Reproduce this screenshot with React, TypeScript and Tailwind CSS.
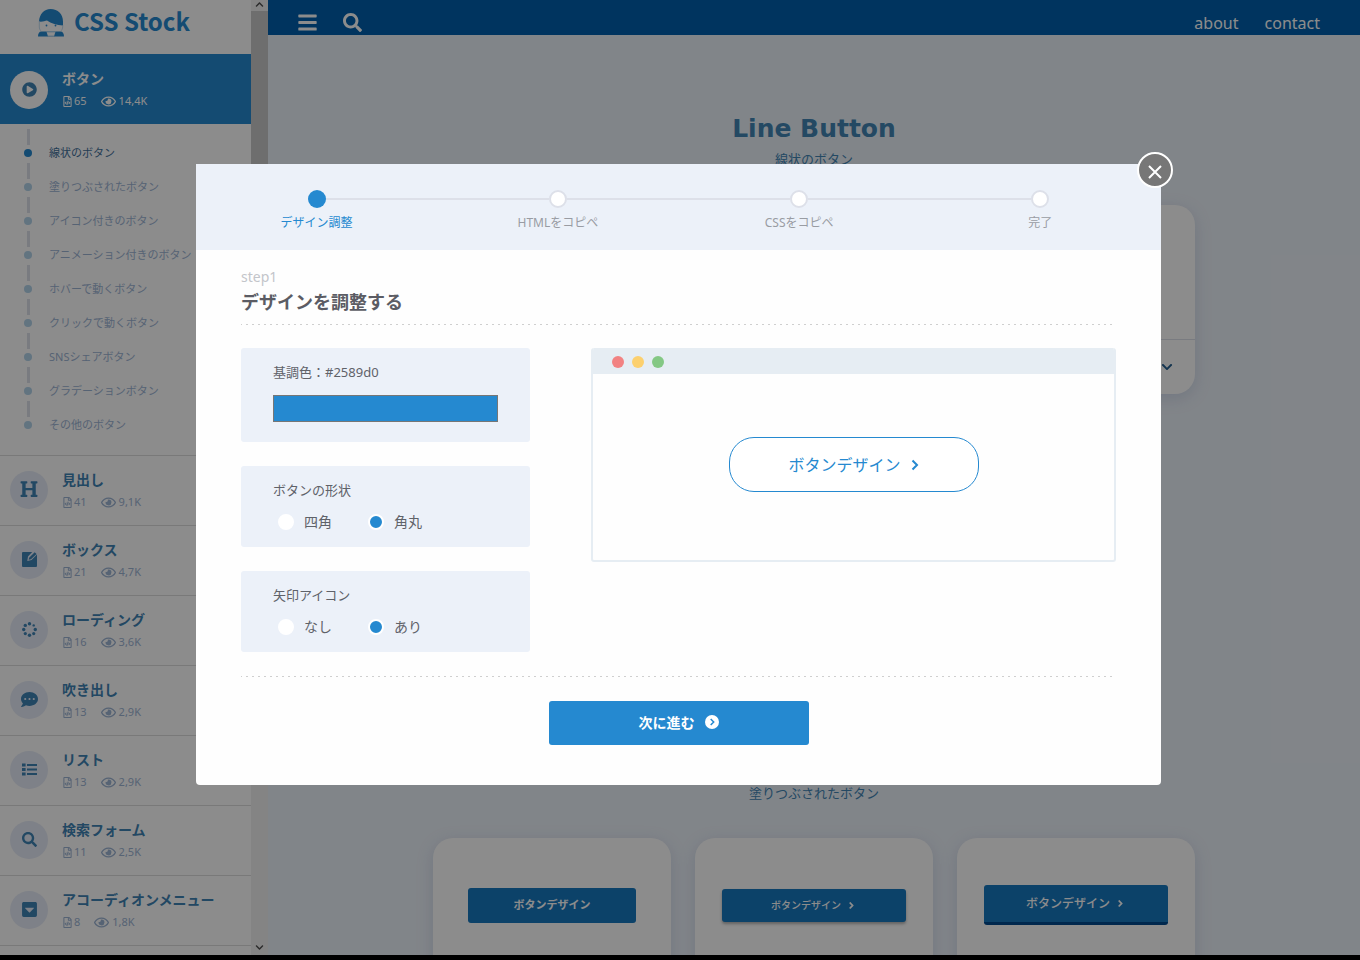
import { ReactNode, useState } from "react";
import {
  FaAngleRight,
  FaBars,
  FaCaretSquareDown,
  FaChevronDown,
  FaCommentDots,
  FaHeading,
  FaPlayCircle,
  FaRegEye,
  FaRegFileCode,
  FaSearch,
} from "react-icons/fa";

function BoxIcon() {
  return (
    <svg viewBox="0 0 15 15" className="size-[15px]" aria-hidden="true">
      <path d="M1 0H10.200L6 4.400 5.300 8.900l4.200-.8L15 2.600V14a1 1 0 0 1-1 1H1a1 1 0 0 1-1-1V1a1 1 0 0 1 1-1z" fill="currentColor" />
      <path d="M6.600 7.700l.5-2L12.700.2l1.900 1.700-5.700 5.400z" fill="currentColor" />
    </svg>
  );
}

function SpinnerIcon() {
  const dots = [
    [7.5, 1.7, 1.7],
    [11.7, 3.4, 1.2],
    [13.3, 7.5, 1.7],
    [11.7, 11.6, 1.6],
    [7.5, 13.3, 1.7],
    [3.3, 11.6, 1.6],
    [1.7, 7.5, 1.7],
    [3.3, 3.4, 1.7],
  ];
  return (
    <svg viewBox="0 0 15 15" className="size-[15px]" aria-hidden="true">
      {dots.map(([x, y, r]) => (
        <circle key={`${x}-${y}`} cx={x} cy={y} r={r} fill="currentColor" />
      ))}
    </svg>
  );
}

function ListIcon() {
  return (
    <svg viewBox="0 0 15 13" className="h-[13px] w-[15px]" aria-hidden="true">
      <path d="M0 0.500h3.600v3H0zM0 5h3.600v3H0zM0 9.500h3.600v3H0zM5 1h10v2H5zM5 5.500h10v2H5zM5 10h10v2H5z" fill="currentColor" />
    </svg>
  );
}

function NextIcon() {
  return (
    <svg viewBox="0 0 14 14" className="size-[14px]" aria-hidden="true">
      <circle cx="7" cy="7" r="7" fill="#ffffff" />
      <path d="M5.700 4L8.700 7l-3 3" stroke="#2589d0" strokeWidth="1.500" fill="none" />
    </svg>
  );
}

function Logo() {
  return (
    <svg viewBox="0 0 26 28" className="h-[28px] w-[26px]" aria-hidden="true">
      <path d="M1 12.500C1.500 5 6 0 12.500 0 20 0 25 5 25 12.500v4C19 16.200 13 14.500 9 11.500 7 12 4 13 1 12.500z" fill="#2589d0" />
      <path d="M1.300 12v6c0 1.500.6 2.800 1.500 3.800M24.700 16v2c0 1.500-.6 2.800-1.500 3.800" stroke="#a9cdea" strokeWidth="0.700" fill="none" />
      <circle cx="8.500" cy="16.500" r="0.900" fill="#2589d0" />
      <circle cx="17.500" cy="16.500" r="0.900" fill="#2589d0" />
      <path d="M0 27.500c0-3 1.200-5 3.500-5h5L10 27.500zM26 27.500c0-3-1.200-5-3.500-5h-5L16 27.500z" fill="#2589d0" />
      <path d="M8.500 22.800h9M9.500 27.200h7" stroke="#6fb0de" strokeWidth="0.800" />
    </svg>
  );
}

type Category = { name: string; files: string; views: string; icon: ReactNode };

const categories: Category[] = [
  { name: "見出し", files: "41", views: "9,1K", icon: <FaHeading size={18} /> },
  { name: "ボックス", files: "21", views: "4,7K", icon: <BoxIcon /> },
  { name: "ローディング", files: "16", views: "3,6K", icon: <SpinnerIcon /> },
  { name: "吹き出し", files: "13", views: "2,9K", icon: <FaCommentDots size={17} /> },
  { name: "リスト", files: "13", views: "2,9K", icon: <ListIcon /> },
  { name: "検索フォーム", files: "11", views: "2,5K", icon: <FaSearch size={15} /> },
  { name: "アコーディオンメニュー", files: "8", views: "1,8K", icon: <FaCaretSquareDown size={17} /> },
];

const subItems = [
  "線状のボタン",
  "塗りつぶされたボタン",
  "アイコン付きのボタン",
  "アニメーション付きのボタン",
  "ホバーで動くボタン",
  "クリックで動くボタン",
  "SNSシェアボタン",
  "グラデーションボタン",
  "その他のボタン",
];

function CategoryRow({ item, active = false }: { item: Category; active?: boolean }) {
  return (
    <a
      href="#"
      className={
        active
          ? "flex h-[70px] items-start border-t border-[#2589d0] bg-[#2589d0] pl-[10px] text-white"
          : "flex h-[70px] items-start border-t border-[#dcdcdc] pl-[10px] text-[#3f83b5]"
      }
    >
      <span
        className={
          active
            ? "mt-[16px] flex size-[38px] shrink-0 items-center justify-center rounded-full bg-white pb-[2px] text-[#3f83b5]"
            : "mt-[15px] flex size-[38px] shrink-0 items-center justify-center rounded-full bg-[#e6ebf7] pb-[2px]"
        }
      >
        {item.icon}
      </span>
      <span className="flex flex-col pt-[13px] pl-[14px]">
        <span className="text-[14px] leading-[22px] font-bold whitespace-nowrap">{item.name}</span>
        <span className={active ? "flex items-center text-[11px] leading-[22px]" : "flex items-center text-[11px] leading-[22px] text-[#9db4d4]"}>
          <FaRegFileCode size={11} />
          <span className="pl-[1px]">{item.files}</span>
          <FaRegEye size={15} className="ml-[14px]" />
          <span className="pl-[3px]">{item.views}</span>
        </span>
      </span>
    </a>
  );
}

function Sidebar() {
  return (
    <aside className="flex w-[268px] shrink-0 overflow-hidden bg-white">
      <nav className="w-[251px]">
        <a href="#" className="flex h-[54px] items-start gap-[10px] pt-[9px] pl-[38px] text-[#2589d0]">
          <Logo />
          <span className="font-['Noto_Sans_CJK_JP',sans-serif] text-[24px] leading-[24px] font-bold">CSS Stock</span>
        </a>
        <CategoryRow active item={{ name: "ボタン", files: "65", views: "14,4K", icon: <FaPlayCircle size={15} /> }} />
        <ul className="h-[331px] pt-[5px]">
          {subItems.map((label, i) => (
            <li key={label} className="flex h-[34px] pl-[24px]">
              <span className="flex w-[8px] shrink-0 flex-col items-center">
                <span className="h-[16px] w-[3px] bg-[#dde0ea]" />
                <span className={i === 0 ? "mt-[4px] size-[8px] rounded-full bg-[#2589d0]" : "mt-[4px] size-[8px] rounded-full bg-[#b3d3ea]"} />
              </span>
              <a
                href="#"
                className={
                  i === 0
                    ? "pt-[13px] pl-[17px] text-[11px] leading-[22px] whitespace-nowrap text-[#3f6f9a]"
                    : "pt-[13px] pl-[17px] text-[11px] leading-[22px] whitespace-nowrap text-[#9db4d4]"
                }
              >
                {label}
              </a>
            </li>
          ))}
        </ul>
        {categories.map((c) => (
          <CategoryRow key={c.name} item={c} />
        ))}
        <div className="border-t border-[#dcdcdc]" />
      </nav>
      <div className="flex w-[17px] flex-col items-center bg-[#f1f1f1] text-[#505050]">
        <span className="flex h-[11px] items-start">
          <FaChevronDown size={9} className="rotate-180" />
        </span>
        <span className="h-[460px] w-full bg-[#c8c8c8]" />
        <span className="flex flex-1 items-end pb-[3px]">
          <FaChevronDown size={9} />
        </span>
      </div>
    </aside>
  );
}

function MainPage() {
  return (
    <div className="flex min-w-0 flex-1 flex-col overflow-hidden bg-[#ecf2f9]">
      <header className="flex h-[35px] shrink-0 items-center justify-between bg-[#0060ad] pt-[10px] pr-[40px] pl-[29px] text-white">
        <div className="flex items-center gap-[25px]">
          <button type="button" aria-label="メニュー"><FaBars size={21} /></button>
          <button type="button" aria-label="検索"><FaSearch size={19} /></button>
        </div>
        <nav className="flex gap-[26px] text-[16px] leading-[24px]">
          <a href="#">about</a>
          <a href="#">contact</a>
        </nav>
      </header>
      <main className="mx-auto flex w-[762px] flex-col">
        <h2 className="pt-[77px] text-center font-['DejaVu_Sans',sans-serif] text-[25px] leading-[33px] font-bold text-[#4285b5]">Line Button</h2>
        <p className="pt-[4px] text-center text-[13px] leading-[20px] text-[#4285b5]">線状のボタン</p>
        <div className="mt-[36px] grid h-[189px] grid-cols-3 gap-[24px]">
          {["a", "b", "c"].map((k) => (
            <div key={k} className="flex flex-col justify-end rounded-[20px] bg-white shadow-[0_4px_16px_rgba(120,140,190,0.25)]">
              <div className="flex h-[55px] items-center justify-end border-t border-[#dde0ea] pr-[22px] text-[#245f90]">
                <FaChevronDown size={12} />
              </div>
            </div>
          ))}
        </div>
        <h2 className="pt-[352px] text-center font-['DejaVu_Sans',sans-serif] text-[25px] leading-[33px] font-bold text-[#4285b5]">Fill Button</h2>
        <p className="pt-[4px] text-center text-[13px] leading-[20px] text-[#4285b5]">塗りつぶされたボタン</p>
        <div className="mt-[35px] grid h-[189px] grid-cols-3 gap-[24px] text-white">
          <div className="flex items-start justify-center rounded-[20px] bg-white pt-[50px] shadow-[0_4px_16px_rgba(120,140,190,0.25)]">
            <button type="button" className="h-[35px] w-[168px] rounded-[3px] bg-[#1778bf] text-[11px] font-bold">ボタンデザイン</button>
          </div>
          <div className="flex items-start justify-center rounded-[20px] bg-white pt-[51px] shadow-[0_4px_16px_rgba(120,140,190,0.25)]">
            <button type="button" className="flex h-[33px] w-[184px] items-center justify-center gap-[5px] rounded-[3px] bg-[#1778bf] text-[10px] font-medium shadow-[0_2px_3px_rgba(0,0,0,0.3)]">
              ボタンデザイン<FaAngleRight size={11} />
            </button>
          </div>
          <div className="flex items-start justify-center rounded-[20px] bg-white pt-[47px] shadow-[0_4px_16px_rgba(120,140,190,0.25)]">
            <button type="button" className="flex h-[40px] w-[184px] items-center justify-center gap-[5px] rounded-[3px] border-b-3 border-[#00498f] bg-[#1778bf] text-[12px] font-medium">
              ボタンデザイン<FaAngleRight size={11} />
            </button>
          </div>
        </div>
      </main>
    </div>
  );
}

const steps = ["デザイン調整", "HTMLをコピペ", "CSSをコピペ", "完了"];

function Stepper() {
  return (
    <ol className="grid h-[86px] grid-cols-4 bg-[#ecf1f9] pt-[26px]">
      {steps.map((label, i) => (
        <li key={label} className="flex flex-col items-center">
          <span className="flex w-full items-center">
            <span className={i === 0 ? "h-[2px] flex-1" : "h-[2px] flex-1 bg-[#dde0e9]"} />
            <span className={i === 0 ? "size-[18px] rounded-full bg-[#2589d0]" : "size-[18px] rounded-full border-2 border-[#dde0e9] bg-white"} />
            <span className={i === 3 ? "h-[2px] flex-1" : "h-[2px] flex-1 bg-[#dde0e9]"} />
          </span>
          <span className={i === 0 ? "pt-[5px] text-[12px] leading-[20px] text-[#2589d0]" : "pt-[5px] text-[12px] leading-[20px] text-[#999ca3]"}>{label}</span>
        </li>
      ))}
    </ol>
  );
}

function RadioGroup({
  legend,
  name,
  options,
  value,
  onChange,
}: {
  legend: string;
  name: string;
  options: string[];
  value: string;
  onChange: (v: string) => void;
}) {
  return (
    <div role="radiogroup" aria-label={legend} className="h-[81px] rounded-[3px] bg-[#ecf1f9] px-[32px] pt-[14px] text-[#5f6269]">
      <p className="text-[13px] leading-[20px]">{legend}</p>
      <div className="flex pt-[11px] pl-[5px]">
        {options.map((o) => (
          <label key={o} className="flex w-[90px] items-center gap-[10px] text-[14px] leading-[22px]">
            <input
              type="radio"
              name={name}
              checked={value === o}
              onChange={() => onChange(o)}
              className="size-[16px] appearance-none rounded-full border-2 border-white bg-white checked:bg-[#2589d0]"
            />
            {o}
          </label>
        ))}
      </div>
    </div>
  );
}

function Dashes() {
  return <div className="h-px bg-[repeating-linear-gradient(90deg,#cfcfcf_0_1px,transparent_1px_5px,#cfcfcf_5px_7px,transparent_7px_11px,#cfcfcf_11px_12px)]" />;
}

function Modal() {
  const [color, setColor] = useState("#2589d0");
  const [shape, setShape] = useState("角丸");
  const [arrow, setArrow] = useState("あり");

  return (
    <div role="dialog" aria-modal="true" aria-label="デザインを調整する" className="relative w-full max-w-[965px] rounded-[4px] bg-[#fefefe]">
      <button
        type="button"
        aria-label="閉じる"
        className="absolute -top-[12px] -right-[12px] flex size-[36px] items-center justify-center rounded-full border-2 border-white bg-[#777777] pt-[4px] text-white"
      >
        <svg viewBox="0 0 14 14" className="size-[14px]" aria-hidden="true">
          <path d="M1 1l12 12M13 1L1 13" stroke="currentColor" strokeWidth="2" />
        </svg>
      </button>
      <Stepper />
      <div className="px-[45px] pb-[40px]">
        <p className="pt-[17px] text-[14px] leading-[20px] text-[#c3c5ca]">step1</p>
        <h1 className="pb-[7px] text-[18px] leading-[30px] font-bold text-[#5b5c64]">デザインを調整する</h1>
        <Dashes />
        <div className="flex items-start justify-between pt-[23px] pb-[24px]">
          <div className="flex w-[289px] flex-col gap-[24px]">
            <div className="h-[94px] rounded-[3px] bg-[#ecf1f9] px-[32px] pt-[14px]">
              <label htmlFor="base-color" className="block text-[13px] leading-[20px] text-[#5f6269]">基調色：{color}</label>
              <div className="mt-[13px] bg-[#767676] p-px">
                <input
                  id="base-color"
                  type="color"
                  value={color}
                  onChange={(e) => setColor(e.target.value)}
                  className="block h-[25px] w-full appearance-none p-0 [&::-webkit-color-swatch]:rounded-none [&::-webkit-color-swatch]:border-0 [&::-webkit-color-swatch-wrapper]:p-0"
                />
              </div>
            </div>
            <RadioGroup legend="ボタンの形状" name="shape" options={["四角", "角丸"]} value={shape} onChange={setShape} />
            <RadioGroup legend="矢印アイコン" name="arrow" options={["なし", "あり"]} value={arrow} onChange={setArrow} />
          </div>
          <div className="w-[525px] overflow-hidden rounded-[3px] border-2 border-t-0 border-[#e6edf3]">
            <div className="flex h-[26px] items-center gap-[8px] bg-[#e6edf3] pt-[2px] pl-[19px]">
              <span className="size-[12px] rounded-full bg-[#f28282]" />
              <span className="size-[12px] rounded-full bg-[#fcd06e]" />
              <span className="size-[12px] rounded-full bg-[#84c884]" />
            </div>
            <div className="flex h-[186px] items-center justify-center pb-[5px]">
              <button
                type="button"
                style={{ color, borderColor: color }}
                className={
                  shape === "角丸"
                    ? "flex h-[55px] w-[250px] items-center justify-center gap-[10px] rounded-[25px] border bg-white text-[16px]"
                    : "flex h-[55px] w-[250px] items-center justify-center gap-[10px] border bg-white text-[16px]"
                }
              >
                ボタンデザイン
                {arrow === "あり" && (
                  <svg viewBox="0 0 8 12" className="h-[12px] w-[8px]" aria-hidden="true">
                    <path d="M1.500 1.500L6 6l-4.500 4.500" stroke="currentColor" strokeWidth="2" fill="none" />
                  </svg>
                )}
              </button>
            </div>
          </div>
        </div>
        <Dashes />
        <button
          type="button"
          className="mx-auto mt-[24px] flex h-[44px] w-[260px] items-center justify-center gap-[10px] rounded-[3px] bg-[#2589d0] pb-[2px] text-[14px] font-bold text-white"
        >
          次に進む
          <NextIcon />
        </button>
      </div>
    </div>
  );
}

export default function App() {
  return (
    <div className="flex h-screen flex-col overflow-hidden bg-black font-['Noto_Sans','Noto_Sans_CJK_JP',sans-serif]">
      <div className="relative flex min-h-0 flex-1 overflow-hidden">
        <Sidebar />
        <MainPage />
        <div className="absolute inset-0 flex items-start justify-center bg-black/45 pt-[164px] pr-[3px]">
          <Modal />
        </div>
      </div>
      <div className="h-[5px] shrink-0 bg-black" />
    </div>
  );
}
